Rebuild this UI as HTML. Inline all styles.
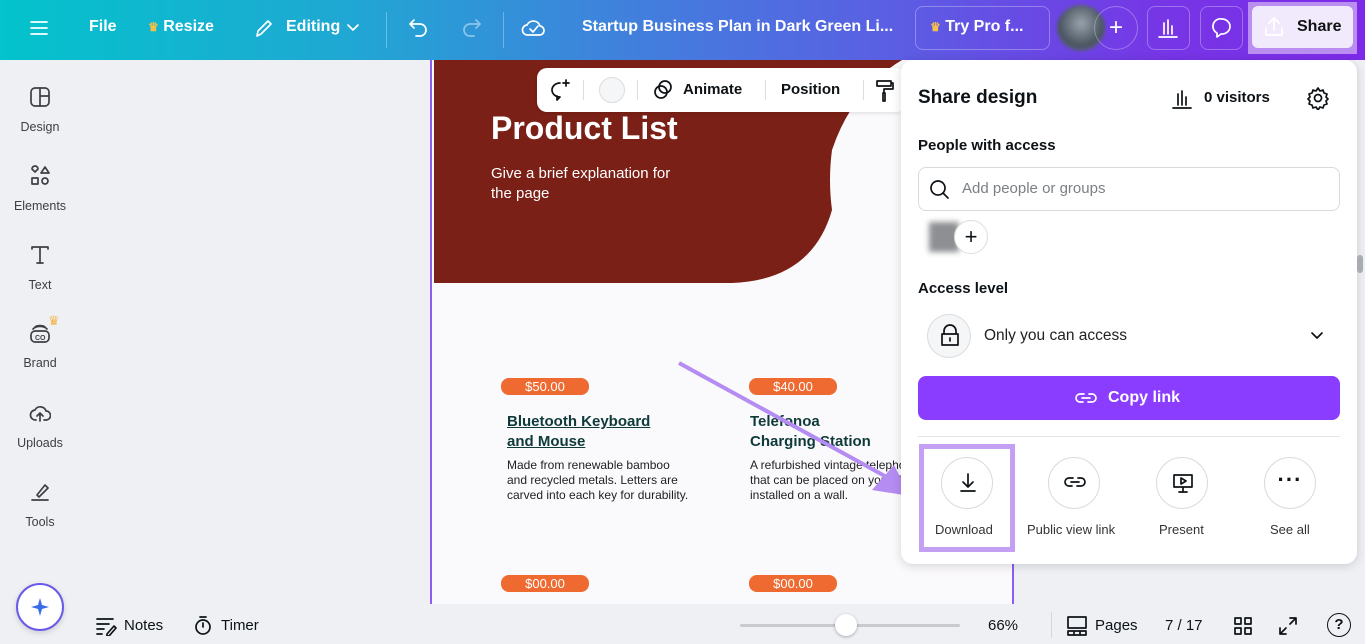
<!DOCTYPE html>
<html><head><meta charset="utf-8"><style>
*{box-sizing:border-box;margin:0;padding:0}
body{width:1365px;height:644px;overflow:hidden;font-family:"Liberation Sans",sans-serif;background:#eef0f4;position:relative;color:#0d1216}
.abs{position:absolute}
.top{left:0;top:0;width:1365px;height:60px;background:linear-gradient(90deg,#03c3cc 0%,#1fa8d3 25%,#3f82dc 45%,#5a5fe3 65%,#7636e6 85%,#7d2ae8 100%);color:#fff}
.top .t{position:absolute;top:18px;font-size:16px;font-weight:bold;color:#fff}
.ic{stroke:currentColor;fill:none;stroke-width:1.7;stroke-linecap:round;stroke-linejoin:round}
.side{left:0;top:60px;width:80px;height:584px}
.si{position:absolute;left:0;width:80px;text-align:center;font-size:12.5px;color:#3c3f44}
.si svg{display:block;margin:0 auto 12px}
.panel{left:901px;top:60px;width:456px;height:504px;background:#fff;border-radius:12px;box-shadow:0 2px 10px rgba(0,0,0,.15)}
.h{font-size:15px;font-weight:bold;position:absolute}
.btm{left:0;top:604px;width:1365px;height:40px}
</style></head><body>
<div class="abs top">
  <svg class="abs" style="left:29px;top:18px" width="20" height="20"><path class="ic" d="M2 4h16M2 10h16M2 16h16" stroke="#fff"/></svg>
  <div class="t" style="left:89px">File</div>
  <div class="t" style="left:148px"><span style="color:#f7c04a;font-size:12px">♛</span> Resize</div>
  <svg class="abs" style="left:253px;top:17px" width="22" height="22"><path class="ic" d="M4 19l1-5L15 4l3 3L8 17z" stroke="#fff"/></svg>
  <div class="t" style="left:286px">Editing</div>
  <svg class="abs" style="left:346px;top:22px" width="14" height="12"><path class="ic" d="M2 3l5 5 5-5" stroke="#fff"/></svg>
  <div class="abs" style="left:386px;top:12px;width:1px;height:36px;background:rgba(255,255,255,.3)"></div>
  <svg class="abs" style="left:406px;top:16px" width="26" height="24"><path class="ic" d="M8 4L4 8l4 4M4 8h10a6 6 0 010 12h-4" stroke="#fff"/></svg>
  <svg class="abs" style="left:458px;top:16px" width="26" height="24" opacity=".45"><path class="ic" d="M18 4l4 4-4 4M22 8H12a6 6 0 000 12h4" stroke="#fff"/></svg>
  <div class="abs" style="left:503px;top:12px;width:1px;height:36px;background:rgba(255,255,255,.3)"></div>
  <svg class="abs" style="left:521px;top:15px" width="26" height="26"><path class="ic" d="M7 20a5 5 0 01-1-10 7 7 0 0113 1 4.5 4.5 0 01-1 9z M9 14l3 3 5-6" stroke="#fff"/></svg>
  <div class="t" style="left:582px">Startup Business Plan in Dark Green Li...</div>
  <div class="abs" style="left:915px;top:6px;width:135px;height:44px;border:1px solid rgba(255,255,255,.3);border-radius:8px"></div>
  <div class="t" style="left:930px"><span style="color:#f7c04a;font-size:12px">♛</span> Try Pro f...</div>
  <div class="abs" style="left:1057px;top:5px;width:48px;height:46px;border-radius:50%;background:radial-gradient(circle at 50% 40%,#9aa3ad,#4a5560 60%,#6c6ea8);filter:blur(1.5px)"></div>
  <div class="abs" style="left:1094px;top:6px;width:44px;height:44px;border:1px solid rgba(255,255,255,.3);border-radius:50%;font-size:24px;text-align:center;line-height:42px">+</div>
  <div class="abs" style="left:1147px;top:6px;width:43px;height:44px;border:1px solid rgba(255,255,255,.3);border-radius:8px"></div>
  <svg class="abs" style="left:1157px;top:17px" width="22" height="22"><path class="ic" d="M2 20h18M7 17V6M11 17V3M15 17V9" stroke="#fff"/></svg>
  <div class="abs" style="left:1200px;top:6px;width:43px;height:44px;border:1px solid rgba(255,255,255,.3);border-radius:8px"></div>
  <svg class="abs" style="left:1210px;top:16px" width="24" height="24"><path class="ic" d="M12 3a8 7.5 0 110 15h-1l-4 3v-4A7.5 7.5 0 0112 3z" stroke="#fff"/></svg>
  <div class="abs" style="left:1248px;top:2px;width:109px;height:52px;background:#b98ef0;padding:4px"><div style="width:101px;height:42px;background:#f1e9fc;border-radius:6px;position:relative">
    <svg class="abs" style="left:10px;top:9px" width="24" height="24"><path class="ic" d="M12 15V3M7 8l5-5 5 5M4 13v7h16v-7" stroke="#111"/></svg>
    <div class="abs" style="left:45px;top:12px;font-size:16px;font-weight:bold;color:#111">Share</div></div></div>
</div>
<div class="abs side">
  <div class="si" style="top:26px"><svg width="22" height="22"><rect x="2" y="2" width="18" height="18" rx="4" class="ic" stroke="#3c3f44"/><path class="ic" d="M11 2v18M11 10h9" stroke="#3c3f44"/></svg>Design</div>
  <div class="si" style="top:105px"><svg width="22" height="22"><path class="ic" d="M3 4l3 3 3-3a2 2 0 00-6 0zM16 2l4 6h-8zM3 13h6v6H3zM16 16m-3 0a3 3 0 106 0a3 3 0 10-6 0" stroke="#3c3f44"/></svg>Elements</div>
  <div class="si" style="top:184px"><svg width="22" height="22"><path class="ic" d="M3 5V3h16v2M11 3v16M8 19h6" stroke="#3c3f44"/></svg>Text</div>
  <div class="si" style="top:262px"><svg width="22" height="22"><rect x="2" y="9" width="18" height="11" rx="4" class="ic" stroke="#3c3f44"/><path class="ic" d="M4 7a8 5 0 0114 0M6 5a6 3 0 0110 0" stroke="#3c3f44"/><text x="6" y="18" font-size="7" font-weight="bold" fill="#3c3f44" font-family="Liberation Sans">CO</text></svg>Brand</div>
  <div class="abs" style="left:48px;top:253px;color:#f5b342;font-size:13px">♛</div>
  <div class="si" style="top:342px"><svg width="22" height="22"><path class="ic" d="M7 18a5 5 0 01-1-10 6 6 0 0111 1 4 4 0 010 9h-2M11 19v-8M8 14l3-3 3 3" stroke="#3c3f44"/></svg>Uploads</div>
  <div class="si" style="top:421px"><svg width="22" height="22"><path class="ic" d="M8 14l8-10 3 3-9 9zM3 19h16" stroke="#3c3f44"/></svg>Tools</div>
  <div class="abs" style="left:16px;top:523px;width:48px;height:48px;border-radius:50%;background:#fff;border:2px solid #6a5ae8;box-shadow:0 2px 6px rgba(0,0,0,.15)"><svg class="abs" style="left:11px;top:11px" width="22" height="22"><path d="M11 2l2 7 7 2-7 2-2 7-2-7-7-2 7-2z" fill="#3a6ce8"/></svg></div>
</div>
<!-- canvas -->
<div class="abs" style="left:430px;top:60px;width:584px;height:544px;background:#faf9fb;border-left:2px solid #8b5cf6;border-right:2px solid #8b5cf6;overflow:hidden">
  <svg class="abs" style="left:0;top:0" width="584" height="230"><path d="M2 0H470Q420 30 400 90Q396 120 400 150Q380 220 300 223H2z" fill="#7b2016"/></svg>
  <div class="abs" style="left:59px;top:50px;font-size:32px;font-weight:bold;color:#fff">Product List</div>
  <div class="abs" style="left:59px;top:104px;font-size:15px;line-height:20px;color:#fff">Give a brief explanation for<br>the page</div>
  <div class="abs" style="left:69px;top:318px;width:88px;height:17px;background:#ee6a30;border-radius:8px;color:#fff;font-size:13px;text-align:center;line-height:17px">$50.00</div>
  <div class="abs" style="left:317px;top:318px;width:88px;height:17px;background:#ee6a30;border-radius:8px;color:#fff;font-size:13px;text-align:center;line-height:17px">$40.00</div>
  <div class="abs" style="left:69px;top:515px;width:88px;height:17px;background:#ee6a30;border-radius:8px;color:#fff;font-size:13px;text-align:center;line-height:17px">$00.00</div>
  <div class="abs" style="left:317px;top:515px;width:88px;height:17px;background:#ee6a30;border-radius:8px;color:#fff;font-size:13px;text-align:center;line-height:17px">$00.00</div>
  <div class="abs" style="left:75px;top:352px;font-size:15px;font-weight:bold;line-height:20px;color:#0f3a3a;text-decoration:underline">Bluetooth Keyboard <br>and Mouse</div>
  <div class="abs" style="left:318px;top:352px;font-size:15px;font-weight:bold;line-height:20px;color:#0f3a3a">Telefonoa<br>Charging Station</div>
  <div class="abs" style="left:75px;top:398px;font-size:12px;line-height:15px;color:#222">Made from renewable bamboo<br>and recycled metals. Letters are<br>carved into each key for durability.</div>
  <div class="abs" style="left:318px;top:398px;font-size:12px;line-height:15px;color:#222;white-space:nowrap">A refurbished vintage telephone<br>that can be placed on your desk or<br>installed on a wall.</div>
  <svg class="abs" style="left:0;top:0" width="584" height="544"><path d="M247 303L460 420" stroke="#b48cf2" stroke-width="4"/><path d="M478 436L440 430L462 405z" fill="#b48cf2"/></svg>
</div>
<!-- toolbar -->
<div class="abs" style="left:537px;top:68px;width:370px;height:44px;background:#fff;border-radius:10px;box-shadow:0 1px 4px rgba(0,0,0,.12)">
  <svg class="abs" style="left:10px;top:10px" width="26" height="26"><path class="ic" d="M13 5a8 7 0 100 14l-3 3v-4M19 2v6M16 5h6" stroke="#111"/></svg>
  <div class="abs" style="left:46px;top:12px;width:1px;height:20px;background:#ddd"></div>
  <div class="abs" style="left:62px;top:9px;width:26px;height:26px;border-radius:50%;border:1px solid #ddd;background:#f5f6f8"></div>
  <div class="abs" style="left:100px;top:12px;width:1px;height:20px;background:#ddd"></div>
  <svg class="abs" style="left:114px;top:10px" width="24" height="24"><circle cx="14" cy="9" r="6" class="ic" stroke="#111"/><circle cx="10" cy="14" r="6" class="ic" stroke="#aaa"/></svg>
  <div class="abs" style="left:146px;top:13px;font-size:15px;font-weight:bold">Animate</div>
  <div class="abs" style="left:228px;top:12px;width:1px;height:20px;background:#ddd"></div>
  <div class="abs" style="left:244px;top:13px;font-size:15px;font-weight:bold">Position</div>
  <div class="abs" style="left:326px;top:12px;width:1px;height:20px;background:#ddd"></div>
  <svg class="abs" style="left:336px;top:10px" width="24" height="26"><path class="ic" d="M4 3h14v5H4zM18 5h2v6h-9v4M10 15h2v8h-2z" stroke="#111"/></svg>
</div>
<!-- share panel -->
<div class="abs panel">
  <div class="h" style="left:17px;top:27px;font-size:19px">Share design</div>
  <svg class="abs" style="left:270px;top:28px" width="22" height="22"><path class="ic" d="M2 20h18M7 17V6M11 17V3M15 17V9" stroke="#111"/></svg>
  <div class="abs" style="left:303px;top:29px;font-size:15px;font-weight:bold">0 visitors</div>
  <svg class="abs" style="left:405px;top:26px" width="24" height="24"><circle cx="12" cy="12" r="3.5" class="ic" stroke="#111"/><path class="ic" d="M12 2l2 3 3-1 1 3 3 1-1 3 2 2-2 2 1 3-3 1-1 3-3-1-2 3-2-3-3 1-1-3-3-1 1-3-2-2 2-2-1-3 3-1 1-3 3 1z" stroke="#111"/></svg>
  <div class="h" style="left:17px;top:77px">People with access</div>
  <div class="abs" style="left:17px;top:107px;width:422px;height:44px;border:1px solid #d8dadd;border-radius:8px">
    <svg class="abs" style="left:10px;top:11px" width="22" height="22"><circle cx="9" cy="9" r="7" class="ic" stroke="#111"/><path class="ic" d="M14 14l5 5" stroke="#111"/></svg>
    <div class="abs" style="left:43px;top:12px;font-size:15px;color:#7b7f85">Add people or groups</div>
  </div>
  <div class="abs" style="left:28px;top:162px;width:30px;height:30px;background:#8d8f92;filter:blur(3px)"></div>
  <div class="abs" style="left:53px;top:160px;width:34px;height:34px;border-radius:50%;border:1px solid #ddd;background:#fff;text-align:center;line-height:31px;font-size:22px">+</div>
  <div class="h" style="left:17px;top:220px">Access level</div>
  <div class="abs" style="left:26px;top:254px;width:44px;height:44px;border-radius:50%;border:1px solid #d8dadd;background:#f5f6f8">
    <svg class="abs" style="left:11px;top:9px" width="22" height="24"><path class="ic" d="M5 10V7a6 6 0 0112 0v3M3 10h16v11H3zM11 14v3" stroke="#111"/></svg></div>
  <div class="abs" style="left:83px;top:267px;font-size:15.5px;color:#222">Only you can access</div>
  <svg class="abs" style="left:408px;top:268px" width="16" height="16"><path class="ic" d="M3 5l5 5 5-5" stroke="#111" stroke-width="2"/></svg>
  <div class="abs" style="left:17px;top:316px;width:422px;height:44px;background:#8b3dff;border-radius:8px;color:#fff">
    <svg class="abs" style="left:156px;top:12px" width="24" height="20"><path class="ic" d="M10 6H6a4 4 0 000 8h3M14 14h4a4 4 0 000-8h-3M8 10h8" stroke="#fff" stroke-width="2"/></svg>
    <div class="abs" style="left:190px;top:13px;font-size:16px;font-weight:bold">Copy link</div></div>
  <div class="abs" style="left:17px;top:376px;width:422px;height:1px;background:#e4e5e7"></div>
  <div class="abs" style="left:18px;top:384px;width:96px;height:108px;border:5px solid #c3a0f2"></div>
  <div class="abs" style="left:40px;top:397px;width:52px;height:52px;border-radius:50%;border:1px solid #d8dadd"><svg class="abs" style="left:15px;top:14px" width="22" height="22"><path class="ic" d="M11 2v13M6 10l5 5 5-5M4 19h14" stroke="#111"/></svg></div>
  <div class="abs" style="left:34px;top:462px;font-size:13px;color:#333">Download</div>
  <div class="abs" style="left:147px;top:397px;width:52px;height:52px;border-radius:50%;border:1px solid #d8dadd"><svg class="abs" style="left:14px;top:15px" width="24" height="20"><path class="ic" d="M10 5H6a4 4 0 000 8h3M14 13h4a4 4 0 000-8h-3M8 9h8" stroke="#111"/></svg></div>
  <div class="abs" style="left:126px;top:462px;font-size:13px;color:#333">Public view link</div>
  <div class="abs" style="left:255px;top:397px;width:52px;height:52px;border-radius:50%;border:1px solid #d8dadd"><svg class="abs" style="left:14px;top:13px" width="24" height="24"><path class="ic" d="M3 4h18v12H3zM12 16v5M8 21h8M10 7l5 3-5 3z" stroke="#111"/></svg></div>
  <div class="abs" style="left:258px;top:462px;font-size:13px;color:#333">Present</div>
  <div class="abs" style="left:363px;top:397px;width:52px;height:52px;border-radius:50%;border:1px solid #d8dadd;text-align:center;line-height:44px;font-size:22px;font-weight:bold;letter-spacing:1px">···</div>
  <div class="abs" style="left:369px;top:462px;font-size:13px;color:#333">See all</div>
</div>
<div class="abs" style="left:1357px;top:255px;width:6px;height:18px;border-radius:3px;background:#a9acb1"></div>
<!-- bottom bar -->
<div class="abs btm">
  <svg class="abs" style="left:95px;top:12px" width="22" height="20"><path class="ic" d="M2 3h16M2 8h12M2 13h7M2 18h5M12 18l7-8 2 2-7 8h-2z" stroke="#111"/></svg>
  <div class="abs" style="left:124px;top:13px;font-size:15px">Notes</div>
  <svg class="abs" style="left:193px;top:10px" width="22" height="22"><circle cx="10" cy="13" r="7" class="ic" stroke="#111"/><path class="ic" d="M7 3h6M10 13V9" stroke="#111"/></svg>
  <div class="abs" style="left:221px;top:13px;font-size:15px">Timer</div>
  <div class="abs" style="left:740px;top:20px;width:220px;height:3px;background:#c8cace;border-radius:2px"></div>
  <div class="abs" style="left:835px;top:10px;width:22px;height:22px;border-radius:50%;background:#fff;box-shadow:0 1px 3px rgba(0,0,0,.3)"></div>
  <div class="abs" style="left:988px;top:13px;font-size:15px">66%</div>
  <div class="abs" style="left:1051px;top:8px;width:1px;height:26px;background:#d4d6da"></div>
  <svg class="abs" style="left:1066px;top:11px" width="22" height="22"><path class="ic" d="M2 2h18v11H2zM2 16h18v4H2zM8 16v4M14 16v4" stroke="#111"/></svg>
  <div class="abs" style="left:1095px;top:13px;font-size:15px">Pages</div>
  <div class="abs" style="left:1165px;top:13px;font-size:15px">7 / 17</div>
  <svg class="abs" style="left:1233px;top:12px" width="20" height="20"><rect x="2" y="2" width="6" height="6" class="ic" stroke="#111"/><rect x="12" y="2" width="6" height="6" class="ic" stroke="#111"/><rect x="2" y="12" width="6" height="6" class="ic" stroke="#111"/><rect x="12" y="12" width="6" height="6" class="ic" stroke="#111"/></svg>
  <svg class="abs" style="left:1277px;top:11px" width="22" height="22"><path class="ic" d="M13 3h6v6M19 3l-6 6M9 19H3v-6M3 19l6-6" stroke="#111"/></svg>
  <div class="abs" style="left:1327px;top:9px;width:24px;height:24px;border-radius:50%;border:1.8px solid #111;text-align:center;font-size:15px;font-weight:bold;line-height:21px">?</div>
</div>
</body></html>
